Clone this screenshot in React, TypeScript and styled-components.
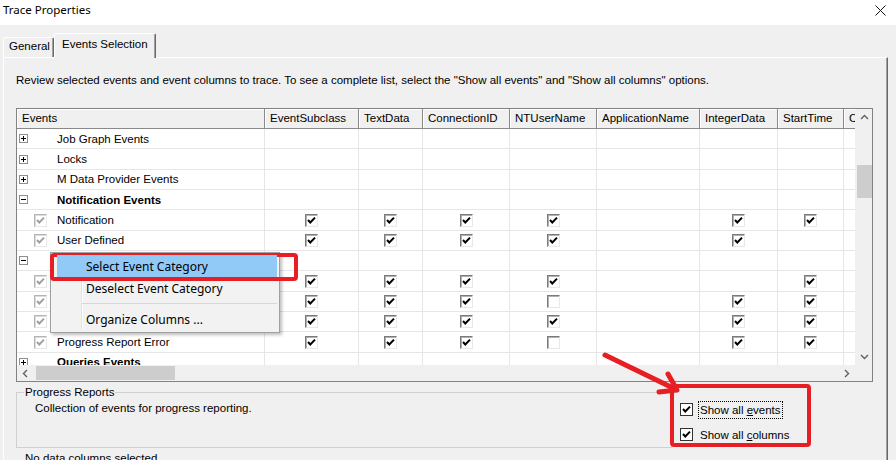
import React from 'react';
import styled, { createGlobalStyle } from 'styled-components';

const Global = createGlobalStyle`
  html, body { margin: 0; padding: 0; background: #f0f0f0; }
  body { font-family: "Liberation Sans", Arial, sans-serif; }
`;

type CheckVal = 0 | 1 | 2;
interface RowData {
  kind: 'cat' | 'event';
  name: string;
  expand?: '+' | '-';
  bold?: boolean;
  checks?: CheckVal[];
}

const columns = [
  { name: 'EventSubclass', w: 94 },
  { name: 'TextData', w: 64 },
  { name: 'ConnectionID', w: 87 },
  { name: 'NTUserName', w: 87 },
  { name: 'ApplicationName', w: 103 },
  { name: 'IntegerData', w: 78 },
  { name: 'StartTime', w: 66 },
  { name: 'CPUTime', w: 70 },
];
const template = `248px ${columns.map((c) => c.w + 'px').join(' ')}`;

const rows: RowData[] = [
  { kind: 'cat', name: 'Job Graph Events', expand: '+' },
  { kind: 'cat', name: 'Locks', expand: '+' },
  { kind: 'cat', name: 'M Data Provider Events', expand: '+' },
  { kind: 'cat', name: 'Notification Events', expand: '-', bold: true },
  { kind: 'event', name: 'Notification', checks: [1, 1, 1, 1, 0, 1, 1, 0] },
  { kind: 'event', name: 'User Defined', checks: [1, 1, 1, 1, 0, 1, 0, 0] },
  { kind: 'cat', name: 'Progress Reports', expand: '-', bold: true },
  { kind: 'event', name: 'Progress Report Begin', checks: [1, 1, 1, 1, 0, 0, 1, 0] },
  { kind: 'event', name: 'Progress Report Current', checks: [1, 1, 1, 2, 0, 1, 1, 0] },
  { kind: 'event', name: 'Progress Report End', checks: [1, 1, 1, 1, 0, 1, 1, 0] },
  { kind: 'event', name: 'Progress Report Error', checks: [1, 1, 1, 2, 0, 1, 1, 0] },
  { kind: 'cat', name: 'Queries Events', expand: '+', bold: true },
];

const Root = styled.div`
  position: relative;
  width: 896px;
  height: 460px;
  overflow: hidden;
  background: #f0f0f0;
  font-family: "Liberation Sans", Arial, sans-serif;
  font-size: 11.5px;
  color: #000;
  display: flex;
  flex-direction: column;
`;

const TitleBar = styled.div`
  flex: none;
  height: 25px;
  box-sizing: border-box;
  background: #fff;
  display: flex;
  align-items: flex-start;
  justify-content: space-between;
  padding: 2px 10px 0 3px;
`;

const TitleText = styled.span`
  font-family: "Noto Sans", "Liberation Sans", sans-serif;
  font-size: 11.5px;
  line-height: 16px;
  color: #000;
`;

const CloseGlyph = styled.svg`
  margin-top: 3px;
  width: 11px;
  height: 11px;
`;

const Body = styled.div`
  flex: 1;
  min-height: 0;
  display: flex;
  flex-direction: column;
  padding: 8px 8px 0 3px;
`;

const TabStrip = styled.div`
  flex: none;
  height: 24px;
  display: flex;
  align-items: flex-end;
  position: relative;
  z-index: 1;
`;

const Tab = styled.div<{ $active?: boolean }>`
  box-sizing: border-box;
  height: ${(p) => (p.$active ? 25 : 20)}px;
  width: ${(p) => (p.$active ? 102 : 51)}px;
  margin-bottom: ${(p) => (p.$active ? -1 : 0)}px;
  padding: ${(p) => (p.$active ? '3px 0 0 7px' : '1px 0 0 5px')};
  background: #f0f0f0;
  border-top: 1px solid #fff;
  border-left: 1px solid #fff;
  border-right: 1px solid #696969;
  box-shadow: inset -1px 0 0 #a0a0a0;
  border-radius: 2px 2px 0 0;
  line-height: 14px;
  white-space: nowrap;
`;

const Panel = styled.div`
  flex: 1;
  min-height: 0;
  display: flex;
  flex-direction: column;
  border-top: 1px solid #fff;
  border-left: 1px solid #fff;
  border-right: 1px solid #696969;
  box-shadow: inset -1px 0 0 #a0a0a0;
  padding: 15px 14px 0 12px;
`;

const Intro = styled.div`
  line-height: 14px;
  margin-bottom: 21px;
  white-space: nowrap;
`;

const GridFrame = styled.div`
  flex: none;
  width: 857px;
  height: 274px;
  box-sizing: border-box;
  border: 1px solid #828282;
  display: grid;
  grid-template-columns: 1fr 17px;
  grid-template-rows: 1fr 16px;
  background: #fff;
`;

const TableArea = styled.div`
  overflow: hidden;
  min-width: 0;
  min-height: 0;
`;

const HeaderRow = styled.div<{ $cols: string }>`
  display: grid;
  grid-template-columns: ${(p) => p.$cols};
  height: 20px;
`;

const HeaderCell = styled.div`
  box-sizing: border-box;
  background: #f0f0f0;
  border-right: 1px solid #8a8a8a;
  border-bottom: 1px solid #8a8a8a;
  box-shadow: inset 1px 1px 0 #fff;
  padding-left: 5px;
  line-height: 19px;
  white-space: nowrap;
  overflow: hidden;
`;

const Row = styled.div<{ $cols: string }>`
  display: grid;
  grid-template-columns: ${(p) => p.$cols};
  height: 20.35px;
`;

const Cell = styled.div`
  box-sizing: border-box;
  border-right: 1px solid #e6e6e6;
  border-bottom: 1px solid #e6e6e6;
  display: flex;
  align-items: center;
  justify-content: center;
  overflow: hidden;
`;

const NameCell = styled(Cell)`
  justify-content: flex-start;
`;

const ExpandSlot = styled.div`
  width: 17px;
  flex: none;
  display: flex;
  align-items: center;
  padding-left: 2px;
  box-sizing: border-box;
`;

const ExpandBox = styled.span<{ $open: boolean }>`
  position: relative;
  width: 9px;
  height: 9px;
  box-sizing: border-box;
  border: 1px solid #8e8e8e;
  background: #fff;
  &::before {
    content: '';
    position: absolute;
    left: 1px;
    top: 3px;
    width: 5px;
    height: 1px;
    background: #000;
  }
  &::after {
    content: '';
    position: absolute;
    left: 3px;
    top: 1px;
    width: 1px;
    height: 5px;
    background: #000;
    display: ${(p) => (p.$open ? 'none' : 'block')};
  }
`;

const CheckSlot = styled.div`
  width: 23px;
  flex: none;
  display: flex;
  align-items: center;
`;

const NameText = styled.span<{ $bold?: boolean }>`
  font-weight: ${(p) => (p.$bold ? 700 : 400)};
  white-space: nowrap;
`;

const GridCheck = styled.span<{ $disabled?: boolean }>`
  width: 13px;
  height: 13px;
  box-sizing: border-box;
  display: inline-flex;
  align-items: center;
  justify-content: center;
  background: #fff;
  border-top: 1px solid ${(p) => (p.$disabled ? '#b4b4b4' : '#7a7a7a')};
  border-left: 1px solid ${(p) => (p.$disabled ? '#b4b4b4' : '#7a7a7a')};
  border-right: 1px solid #e8e8e8;
  border-bottom: 1px solid #e8e8e8;
  box-shadow: inset 1px 1px 0 ${(p) => (p.$disabled ? '#dcdcdc' : '#b0b0b0')};
  color: ${(p) => (p.$disabled ? '#a0a0a0' : '#000')};
`;

const CheckMark = styled.svg`
  width: 11px;
  height: 11px;
`;

const ScrollV = styled.div`
  background: #f0f0f0;
  display: flex;
  flex-direction: column;
  align-items: center;
  padding: 0 0 0 1px;
`;

const ScrollH = styled.div`
  background: #f0f0f0;
  display: flex;
  align-items: center;
`;

const Corner = styled.div`
  background: #f0f0f0;
`;

const ArrowBtn = styled.div<{ $w: number; $h: number }>`
  width: ${(p) => p.$w}px;
  height: ${(p) => p.$h}px;
  flex: none;
  display: flex;
  align-items: center;
  justify-content: center;
`;

const ThumbV = styled.div`
  margin-top: 39px;
  width: 15px;
  height: 33px;
  background: #cdcdcd;
`;

const ThumbH = styled.div`
  margin-left: 2px;
  width: 139px;
  height: 14px;
  background: #cdcdcd;
`;

const Spacer = styled.div`
  flex: 1;
`;

const BottomRow = styled.div`
  display: flex;
  align-items: flex-start;
  margin-top: 4px;
`;

const GroupBox = styled.fieldset`
  margin: 0;
  padding: 0;
  width: 656px;
  height: 62px;
  box-sizing: border-box;
  border: 1px solid #d0d0d0;
  flex: none;
  min-width: 0;
`;

const GroupTitle = styled.legend`
  margin-left: 7px;
  padding: 0 1px;
  line-height: 13px;
`;

const GroupText = styled.div`
  padding-left: 18px;
  margin-top: 2px;
  line-height: 14px;
`;

const Options = styled.div`
  display: flex;
  flex-direction: column;
  gap: 10px;
  padding: 16px 0 0 8px;
`;

const Option = styled.div`
  display: flex;
  align-items: center;
  height: 15px;
`;

const FlatCheck = styled.span`
  width: 13px;
  height: 13px;
  box-sizing: border-box;
  border: 1px solid #333;
  background: #fff;
  display: inline-flex;
  align-items: center;
  justify-content: center;
  margin-right: 5px;
`;

const OptionLabel = styled.span<{ $focus?: boolean }>`
  padding: 1px 1px;
  border: 1px ${(p) => (p.$focus ? 'dotted #000' : 'solid transparent')};
  line-height: 14px;
  white-space: nowrap;
`;

const Footer = styled.div`
  margin-top: 3px;
  padding-left: 9px;
  line-height: 14px;
`;

const Menu = styled.div`
  position: absolute;
  left: 50px;
  top: 252px;
  width: 230px;
  box-sizing: border-box;
  background: #f2f2f2;
  border: 1px solid #a0a0a0;
  padding: 2px 0 2px 2px;
  box-shadow: 2px 2px 3px rgba(0, 0, 0, 0.25);
  font-family: "Noto Sans", "Liberation Sans", sans-serif;
  font-size: 12px;
  &::before {
    content: '';
    position: absolute;
    left: 30px;
    top: 2px;
    bottom: 2px;
    width: 1px;
    background: #e2e2e2;
    box-shadow: 1px 0 0 #fff;
  }
`;

const MenuItem = styled.div<{ $hot?: boolean }>`
  position: relative;
  z-index: 1;
  height: 22px;
  margin-left: 4px;
  margin-right: 2px;
  padding-left: 29px;
  display: flex;
  align-items: center;
  background: ${(p) => (p.$hot ? '#91c9f7' : 'transparent')};
  white-space: nowrap;
`;

const MenuSep = styled.div`
  position: relative;
  z-index: 1;
  height: 1px;
  margin: 4px 2px 4px 29px;
  background: #d7d7d7;
`;

const MenuCallout = styled.div`
  position: absolute;
  left: 50px;
  top: 253px;
  width: 248px;
  height: 28px;
  box-sizing: border-box;
  border: 4px solid #e81e25;
  border-radius: 4px;
`;

const OptionsCallout = styled.div`
  position: absolute;
  left: 670px;
  top: 384px;
  width: 141px;
  height: 63px;
  box-sizing: border-box;
  border: 4px solid #e81e25;
  border-radius: 4px;
`;

const ArrowLayer = styled.svg`
  position: absolute;
  left: 0;
  top: 0;
  width: 896px;
  height: 460px;
  pointer-events: none;
`;

const Check = () => (
  <CheckMark viewBox="0 0 11 11">
    <polyline points="2,5 4.3,7.5 9,2.6" fill="none" stroke="currentColor" strokeWidth="2" />
  </CheckMark>
);

const Chevron = ({ dir }: { dir: 'up' | 'down' | 'left' | 'right' }) => {
  const pts: Record<string, string> = {
    up: '1,6 4.5,2.5 8,6',
    down: '1,3 4.5,6.5 8,3',
    left: '6,1 2.5,4.5 6,8',
    right: '3,1 6.5,4.5 3,8',
  };
  return (
    <svg width="9" height="9" viewBox="0 0 9 9">
      <polyline points={pts[dir]} fill="none" stroke="#606060" strokeWidth="1.4" />
    </svg>
  );
};

export default function App() {
  return (
    <>
      <Global />
      <Root>
        <TitleBar>
          <TitleText>Trace Properties</TitleText>
          <CloseGlyph viewBox="0 0 11 11">
            <path d="M0.5 0.5 L10.5 10.5 M10.5 0.5 L0.5 10.5" stroke="#111" strokeWidth="1" />
          </CloseGlyph>
        </TitleBar>
        <Body>
          <TabStrip>
            <Tab>General</Tab>
            <Tab $active>Events Selection</Tab>
          </TabStrip>
          <Panel>
            <Intro>
              Review selected events and event columns to trace. To see a complete list, select the "Show all events" and "Show all columns" options.
            </Intro>
            <GridFrame>
              <TableArea>
                <HeaderRow $cols={template}>
                  <HeaderCell>Events</HeaderCell>
                  {columns.map((c) => (
                    <HeaderCell key={c.name}>{c.name}</HeaderCell>
                  ))}
                </HeaderRow>
                {rows.map((r, i) => (
                  <Row key={i} $cols={template}>
                    <NameCell>
                      <ExpandSlot>{r.expand && <ExpandBox $open={r.expand === '-'} />}</ExpandSlot>
                      <CheckSlot>
                        {r.kind === 'event' && (
                          <GridCheck $disabled>
                            <Check />
                          </GridCheck>
                        )}
                      </CheckSlot>
                      <NameText $bold={r.bold}>{r.name}</NameText>
                    </NameCell>
                    {columns.map((c, j) => {
                      const v = r.checks ? r.checks[j] : 0;
                      return (
                        <Cell key={c.name}>
                          {v !== 0 && <GridCheck>{v === 1 && <Check />}</GridCheck>}
                        </Cell>
                      );
                    })}
                  </Row>
                ))}
              </TableArea>
              <ScrollV>
                <ArrowBtn $w={16} $h={17}>
                  <Chevron dir="up" />
                </ArrowBtn>
                <ThumbV />
                <Spacer />
                <ArrowBtn $w={16} $h={17}>
                  <Chevron dir="down" />
                </ArrowBtn>
              </ScrollV>
              <ScrollH>
                <ArrowBtn $w={17} $h={16}>
                  <Chevron dir="left" />
                </ArrowBtn>
                <ThumbH />
                <Spacer />
                <ArrowBtn $w={17} $h={16}>
                  <Chevron dir="right" />
                </ArrowBtn>
              </ScrollH>
              <Corner />
            </GridFrame>
            <BottomRow>
              <GroupBox>
                <GroupTitle>Progress Reports</GroupTitle>
                <GroupText>Collection of events for progress reporting.</GroupText>
              </GroupBox>
              <Options>
                <Option>
                  <FlatCheck>
                    <Check />
                  </FlatCheck>
                  <OptionLabel $focus>
                    Show all <u>e</u>vents
                  </OptionLabel>
                </Option>
                <Option>
                  <FlatCheck>
                    <Check />
                  </FlatCheck>
                  <OptionLabel>
                    Show all <u>c</u>olumns
                  </OptionLabel>
                </Option>
              </Options>
            </BottomRow>
            <Footer>No data columns selected.</Footer>
          </Panel>
        </Body>

        <Menu>
          <MenuItem $hot>Select Event Category</MenuItem>
          <MenuItem>Deselect Event Category</MenuItem>
          <MenuSep />
          <MenuItem>Organize Columns ...</MenuItem>
        </Menu>
        <MenuCallout />
        <OptionsCallout />
        <ArrowLayer viewBox="0 0 896 460">
          <line x1="605" y1="355" x2="675" y2="389" stroke="#e81e25" strokeWidth="5" strokeLinecap="round" />
          <polyline points="659,392 677,390 668,374" fill="none" stroke="#e81e25" strokeWidth="5" strokeLinecap="round" strokeLinejoin="round" />
        </ArrowLayer>
      </Root>
    </>
  );
}
